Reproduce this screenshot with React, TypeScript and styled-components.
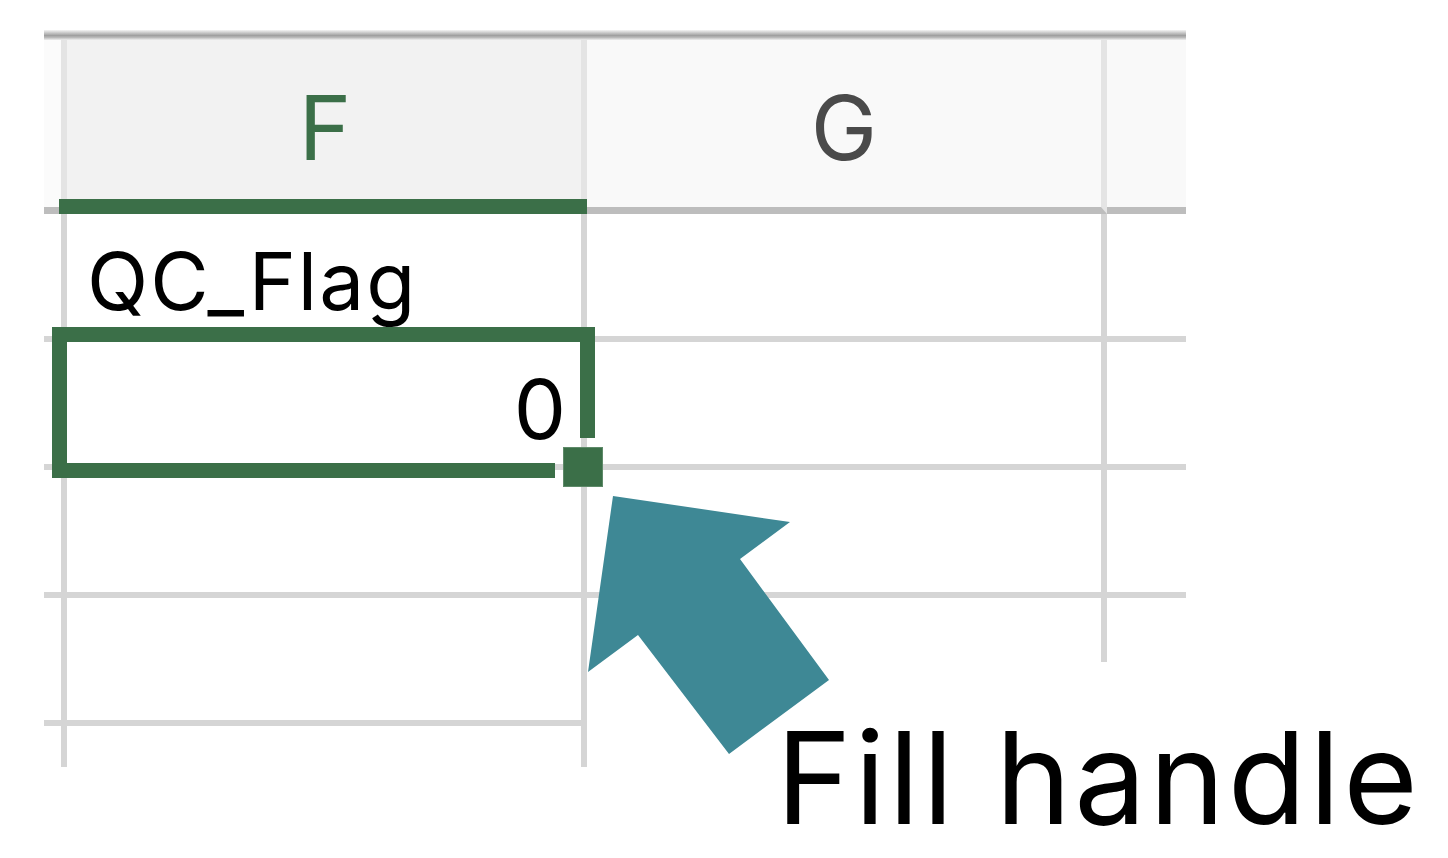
import React from "react";
import styled, { createGlobalStyle, css } from "styled-components";

const GlobalStyle = createGlobalStyle`
  html, body { margin: 0; padding: 0; background: #ffffff; }
  body { font-family: Inter, "Liberation Sans", sans-serif; }
`;

const GREEN = "#3b6f48";
const GRID = "#d5d5d5";
const HEAD_SEP = "#e4e4e4";

const Page = styled.div`
  position: relative;
  width: 1448px;
  height: 858px;
  padding: 30px 0 0 44px;
  box-sizing: border-box;
  overflow: hidden;
  background: #ffffff;
`;

const Sheet = styled.div`
  width: 1142px;
  display: flex;
  flex-direction: column;
`;

const TopRule = styled.div`
  height: 10px;
  background: linear-gradient(
    to bottom,
    #f4f4f4 0%,
    #c6c6c6 30%,
    #a0a0a0 55%,
    #bababa 75%,
    #efefef 100%
  );
`;

const Grid = styled.div`
  display: grid;
  grid-template-columns: 23px 520px 520px 79px;
  grid-template-rows: 174px repeat(4, 128px) 41px;
`;

type Tone = "edge" | "active" | "plain";

const HeaderCell = styled.div<{ $tone: Tone; $last?: boolean }>`
  box-sizing: border-box;
  display: flex;
  justify-content: center;
  align-items: flex-start;
  padding-top: 43px;
  font-size: 89px;
  line-height: 1;
  font-weight: 400;
  color: #4a4a4a;
  background: ${(p) => (p.$tone === "edge" ? "#fbfbfb" : "#f9f9f9")};
  border-right: ${(p) => (p.$last ? "none" : `6px solid ${HEAD_SEP}`)};
  border-bottom: 7px solid #bdbdbd;
  ${(p) =>
    p.$tone === "active" &&
    css`
      margin-left: -8px;
      padding-left: 4px;
      color: ${GREEN};
      border-right: none;
      border-bottom: 15px solid ${GREEN};
      background: linear-gradient(
        to right,
        #fbfbfb 0 2px,
        ${HEAD_SEP} 2px 8px,
        #f2f2f2 8px calc(100% - 6px),
        ${HEAD_SEP} calc(100% - 6px)
      );
    `}
`;

const Cell = styled.div<{
  $last?: boolean;
  $clip?: boolean;
  $open?: boolean;
  $right?: boolean;
  $anchor?: boolean;
  $gutter?: boolean;
}>`
  box-sizing: border-box;
  display: flex;
  align-items: flex-end;
  justify-content: ${(p) => (p.$right ? "flex-end" : "flex-start")};
  padding: ${(p) => (p.$gutter ? "0" : "0 13px 15px 20px")};
  font-size: 80px;
  line-height: 1;
  letter-spacing: 2px;
  color: #000000;
  border-right: ${(p) => (p.$last ? "none" : `6px solid ${GRID}`)};
  border-bottom: ${(p) => (p.$open ? "none" : `6px solid ${GRID}`)};
  ${(p) =>
    p.$clip &&
    css`
      align-self: start;
      height: 64px;
    `}
  ${(p) =>
    p.$anchor &&
    css`
      position: relative;
      font-size: 83px;
      padding-bottom: 13px;
    `}
`;

const Selection = styled.div`
  position: absolute;
  left: -15px;
  top: -15px;
  width: 543px;
  height: 151px;
  z-index: 2;
  pointer-events: none;
`;

type Side = "top" | "left" | "right" | "bottom";

const edgeRules: Record<Side, ReturnType<typeof css>> = {
  top: css`
    left: 0;
    top: 0;
    width: 100%;
    height: 15px;
  `,
  left: css`
    left: 0;
    top: 0;
    width: 15px;
    height: 100%;
  `,
  right: css`
    right: 0;
    top: 0;
    width: 15px;
    height: 111px;
  `,
  bottom: css`
    left: 0;
    bottom: 0;
    width: 503px;
    height: 15px;
  `,
};

const Edge = styled.span<{ $side: Side }>`
  position: absolute;
  background: ${GREEN};
  ${(p) => edgeRules[p.$side]}
`;

const FillHandle = styled.span`
  position: absolute;
  left: 511px;
  top: 120px;
  width: 40px;
  height: 40px;
  box-sizing: border-box;
  background: ${GREEN};
  border: 1px solid #5e8a69;
`;

const Arrow = styled.svg`
  position: absolute;
  left: 588px;
  top: 496px;
  width: 241px;
  height: 258px;
  z-index: 3;
`;

const Label = styled.div`
  position: absolute;
  left: 776px;
  top: 714px;
  font-family: Inter, "Liberation Sans", sans-serif;
  font-size: 128px;
  line-height: 1;
  letter-spacing: 3px;
  color: #000000;
  white-space: nowrap;
  z-index: 3;
`;

const columns = ["F", "G", ""];

export default function App() {
  return (
    <Page>
      <GlobalStyle />
      <Sheet>
        <TopRule />
        <Grid>
          <HeaderCell $tone="edge" />
          {columns.map((c, i) => (
            <HeaderCell
              key={`h${i}`}
              $tone={c === "F" ? "active" : "plain"}
              $last={i === columns.length - 1}
            >
              {c}
            </HeaderCell>
          ))}

          {/* row 1 */}
          <Cell $gutter />
          <Cell>QC_Flag</Cell>
          <Cell />
          <Cell $last />

          {/* row 2 (selected) */}
          <Cell $gutter />
          <Cell $right $anchor>
            0
            <Selection>
              <Edge $side="top" />
              <Edge $side="left" />
              <Edge $side="right" />
              <Edge $side="bottom" />
              <FillHandle />
            </Selection>
          </Cell>
          <Cell />
          <Cell $last />

          {/* row 3 */}
          <Cell $gutter />
          <Cell />
          <Cell />
          <Cell $last />

          {/* row 4 */}
          <Cell $gutter />
          <Cell />
          <Cell $clip $open />
          <Cell $clip $open $last />

          {/* row 5 (partial) */}
          <Cell $gutter $open />
          <Cell $open />
        </Grid>
      </Sheet>

      <Arrow viewBox="0 0 241 258" aria-hidden="true">
        <polygon
          points="25,0 202,26 152,63 241,184 141,258 50,139 0,176"
          fill="#3e8895"
        />
      </Arrow>
      <Label>Fill handle</Label>
    </Page>
  );
}
